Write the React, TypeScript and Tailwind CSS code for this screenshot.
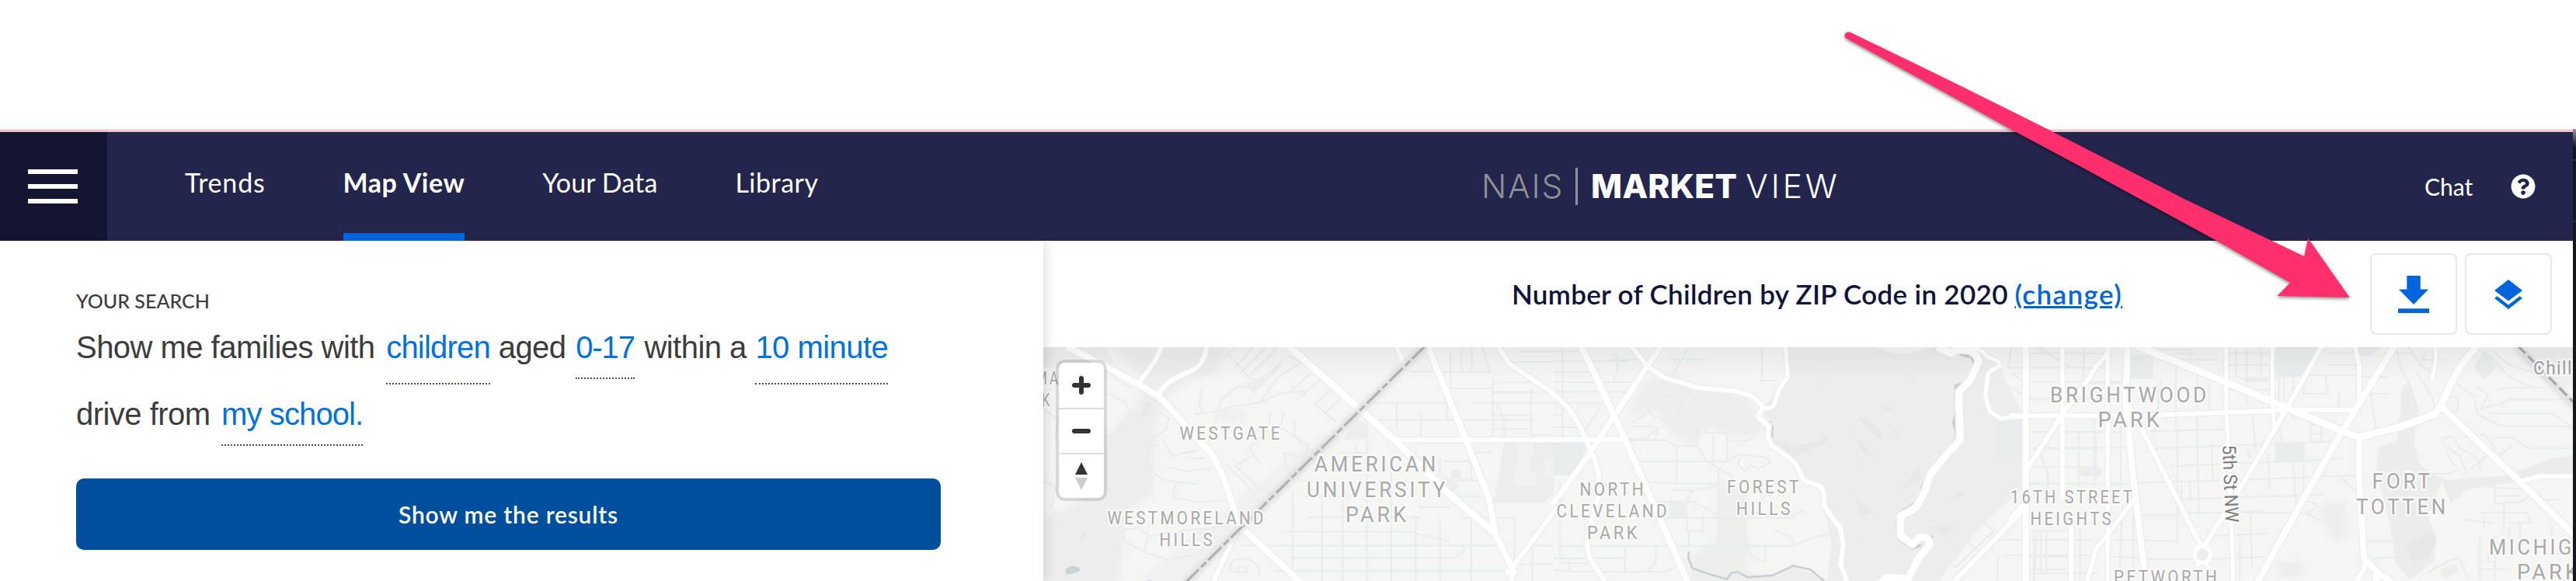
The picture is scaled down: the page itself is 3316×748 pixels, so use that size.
import React from "react";

type LabelProps = { x1: number; x2: number; y: number; s?: number; c?: string; children: string };

function Label({ x1, x2, y, s = 24.5, c = "#a9a9a9", children }: LabelProps) {
  return (
    <text
      x={x1}
      y={y}
      textLength={x2 - x1}
      lengthAdjust="spacingAndGlyphs"
      fontSize={s}
      fill={c}
      stroke="#f9f9f8"
      strokeWidth={5}
      strokeLinejoin="round"
      paintOrder="stroke"
      letterSpacing={4}
    >
      {children}
    </text>
  );
}

type Road = [number, string];

const WEST = "translate(1300 300) scale(.44643 .33333)";
const MID = "translate(2000 430) scale(.44643 .33333)";
const EAST = "translate(2600 430) scale(.45663 .33333)";

const westRoads: Road[] = [
  [8, "M165 441L270 510L372 585L430 632L460 672L500 735L545 800L582 855L610 925L635 1020L660 1130L690 1165L850 1364"],
  [6, "M440 431L418 495L372 580"],
  [6, "M568 431C560 520 530 530 500 545C460 570 440 590 428 628"],
  [9, "M800 431L1000 670L1110 800L1250 990L1400 1160"],
  [6, "M1112 431L1140 515"],
  [8, "M1203 431L1315 800L1380 1020L1400 1160L1450 1300"],
  [6, "M1110 799H1580"],
  [6, "M1405 431L1440 505L1568 620"],
  [6, "M1578 1060L1450 1290L1445 1364"],
  [6, "M655 1150L620 1250L580 1364"],
  [15, "M1445 1300V1320"],
];

const midRoads: Road[] = [
  [8, "M76 40L120 160L200 390L388 963"],
  [6, "M220 40L270 125L318 168L415 207L520 220Q570 232 585 255L607 285Q590 300 590 322L620 355L618 400L628 430L690 490Q712 530 720 565L770 590Q782 600 780 660L800 705L825 745L835 810L828 890L848 963"],
  [7, "M313 40L170 325L105 460L-5 660"],
  [5, "M668 40L675 165L650 215L635 275Q630 288 607 288"],
  [6, "M-10 225Q55 280 90 400L120 490Q135 560 130 620L97 780Q95 850 110 880L152 963"],
  [6, "M-10 408H200"],
  [9, "M1105 50L1145 75L1160 60L1195 62Q1225 75 1225 110L1200 180L1168 225L1170 320L1172 410L1130 470L1085 545L1070 610L1045 670L1000 705L1000 780L1035 812L1055 785Q1085 780 1085 815L1055 860L1022 945L960 940L940 963"],
  [5, "M1210 50L1235 65L1250 90Q1290 100 1285 125L1262 140Q1250 150 1250 180L1245 240L1258 300L1290 326L1370 316"],
  [6, "M1360 670L1150 963"],
  [6, "M1492 740V963"],
];

const eastRoads: Road[] = [
  [8, "M17 40V963"],
  [6, "M120 40V640"],
  [5.5, "M248 40V963"],
  [6, "M303 40L298 250L345 370L515 830"],
  [8, "M304 40L298 250L320 560L352 920"],
  [6, "M-30 316H250L400 312L590 303L760 293H945"],
  [9, "M330 45L580 185L760 290L955 400"],
  [9, "M955 400L1080 355L1170 310L1188 275L1215 190L1250 110L1292 40"],
  [5, "M582 40V300L590 450L602 963"],
  [5, "M712 40V260L718 370"],
  [6, "M854 40L760 270L680 460L610 620L515 830"],
  [6, "M943 40L957 120V250"],
  [8, "M957 390V560L970 865L1012 925L1055 963"],
  [8, "M1060 40L960 260L905 385L815 600L668 963"],
  [5, "M1172 40V110L1162 175"],
  [8, "M1188 280L1410 570L1562 775"],
  [6, "M1410 570L1465 550H1570"],
  [6, "M248 75L215 125L190 180L120 310L10 545"],
  [6, "M145 740V963"],
  [5.5, "M322 640L250 770L215 830L188 963"],
  [5, "M20 640L-30 715"],
  [6, "M975 880Q972 915 945 963M515 870L498 900M515 870L535 905"],
  [9, "M1006 915V963"],
];

const westMinor = [
  "M630 470L690 560L720 570L790 490M655 441L620 470M700 441L650 520M740 441L665 540M770 441L760 460L690 550",
  "M800 470L840 500L770 560L740 620L725 650M840 500L900 560L830 640M870 540L800 620M930 600L880 660L940 730M960 630L905 700",
  "M600 690L640 670L720 655L780 620L850 610M600 690L610 640L660 590L700 600M535 700L600 690L590 740",
  "M430 690L460 715L450 760L415 790Q390 850 400 900Q420 950 470 960L540 970M440 800L470 860L540 840M520 870H565",
  "M430 820L400 830M455 905L510 920L580 910M480 965L470 1020L540 1040L640 1030",
  "M750 700L745 760L690 830L720 890M790 690L780 750L860 820L850 870L790 850L800 920L850 960M820 720V780L850 830M700 860L650 900L700 960L760 1020M620 890L680 970L720 1040",
  "M320 1145L370 1140L400 1170L385 1230L330 1190V1145M320 1145L315 1240L290 1290L285 1344M400 1170L500 1150L640 1130M385 1230L450 1260L560 1240",
  "M280 620L330 650L350 700L310 760L285 790L272 780M300 560L350 600M110 460L160 520L140 560M96 680L140 720L130 800M100 960L130 980L120 1060L140 1100L130 1150",
  "M1150 535H1220M1160 536H1390M1270 470V600H1390M1302 441V535M1332 441V535M1362 441L1385 535M1392 560V800M1045 656H1260M1330 656H1568M1040 722H1285M1308 722H1503V600M1185 700V790M1115 656V760M1260 655V722",
  "M1448 498H1568M1470 458H1568M1392 577H1500M1392 615H1520M1503 660V780H1568M1392 704H1500M1392 757H1500M1405 660L1425 720V790",
  "M1170 840V880M1240 870V940M1330 850V960M1330 882H1250M1180 812L1300 812M1330 848H1390M1270 1018H1370M1220 955H1350",
  "M860 1098H1180M790 1153H1150L1270 1193M665 1207H1420M815 1255H1280L1310 1230V1207M760 1305H1430M840 1018H980M900 1010V1344M960 960V1344M1030 870V1344M1100 850V1344M1170 1100V1344M1240 1100V1344M1330 1060V1344M815 1000V1305M1180 1060H1270M1300 1100H1455V1300M1500 1207H1568M1507 1207V1344M1470 1280H1568",
  "M635 1290Q640 1255 680 1258Q720 1270 720 1320M635 1290Q630 1310 655 1310H685L680 1290L660 1288L655 1310M560 700L545 660L555 600M950 850H1030V700M1000 820V900",
];

const midMinor = [
  "M0 66H85M0 105H210M0 148H120M0 186H250M0 223H225M0 268H140M0 312H25M0 360H70M25 50V400M180 80L185 140L170 186M140 268L90 375M163 100H260M335 99H440M385 60L340 165M600 50L600 180H645",
  "M300 245L345 235L375 255L350 330L300 365L265 405H210M300 245L265 310L225 345M270 300L325 345M310 265L350 290M300 365L290 410M365 240L335 300M375 200L405 250L418 330L440 380L500 385L500 410M415 350L415 430L440 490L520 555M220 358H280",
  "M210 410H325L355 433H415M355 433V578M225 492H505L530 465L575 470L620 480L625 500L590 520L570 510L550 530L530 500L540 475M460 390V490M500 390V490M575 400L560 412H505",
  "M260 570L350 578H475M475 520V815M340 600L400 605L480 585M400 605L380 650M300 647H400L450 680L480 710M300 710H680L720 680M385 710V760H430V700M0 700H75M390 755V815M20 818H690L740 790L800 770M0 867H200M0 910L50 918H320L360 895M205 820V915M295 820V880L270 915M45 870V915M20 885H100M18 570V860M550 690L555 800L570 860L610 880V820",
  "M600 640L650 560M530 640L560 660L600 640M640 760L680 780L700 820M775 100L760 140L790 200L740 240L700 300L660 330M860 340L880 480L870 620L900 720L880 800M1100 220L1140 200M930 60L1000 90M780 220H720",
  "M1380 75H1460M1375 130H1460M1375 250H1460M1375 378H1440M1475 378H1568M1375 442H1568M1375 514H1568M1375 578H1568M1400 440L1425 540V590M1320 50L1310 130H1350M1300 200L1350 230M1320 150L1350 180M1400 50L1490 130M1375 760H1480M1280 795H1350M1300 860L1310 855H1568M1280 860V953M1385 760V953M1405 760V920M1375 925H1568M1240 730L1270 760L1160 900L1140 890M1190 800L1220 835",
];

const eastMinor = [
  "M30 75H110M130 75H240M30 130H240M30 185H285M30 250H110M130 250H290M130 378H290M370 375L580 368M30 442L310 438M370 442L900 415M30 578H310M330 575L580 565M600 565L950 545M430 510L800 490L900 480M440 640L860 620M440 690L800 690M340 700L450 700M30 795H200M265 795L450 800M345 870H490M540 870L690 860M30 860H140M260 860L340 865M265 925H340",
  "M40 50L150 130M180 50V240M210 330V640M215 400V560M60 460L80 550V600M165 380V620M285 330V600M180 190H290M30 910H130M170 750V950M50 760L40 950M75 760V930M290 660L280 950M320 700V900",
  "M390 200V300M400 180L380 380M440 90V360M500 130V400M385 440L390 520M445 370V800M500 380L505 700M535 190V290M540 420L545 560M610 60V170M640 60V280M680 50V160M655 300L665 450M395 60H480V130L560 180M395 100H560M440 75H500M590 75H705M590 120H705M590 215L640 220M640 215L705 215M455 580V700M480 570V640M540 780L700 770M620 800V950M650 700L655 900M700 460L705 600M770 470L780 680L850 720M610 690L690 680",
  "M720 160H945M870 75H945M870 120H950M730 165V270M745 165V260M770 165V240M800 170V230H870L860 160M1050 75H1110M1040 230H960M900 230V285M960 165H1040M990 230L1005 380M820 330V410M850 330V415H820M820 350H880M820 385H860M730 360L740 420L770 440M800 490V640L840 660L810 700M760 300L775 330M900 550L950 610M980 800H1050M985 870L1060 860M640 440L650 480",
  "M1060 50L1075 130L1100 200L1120 290M1095 50L1130 120L1160 150M1130 100H1200M1150 60L1130 110M1120 150L1165 250L1170 290M1075 220L1090 330L1150 320M1210 240L1235 250V300L1210 300M1230 190L1280 240L1290 310L1340 345L1370 358H1559M1285 200L1320 235L1300 290L1350 270L1380 253H1559M1320 307H1500L1530 330L1559 370M1345 215L1380 207H1480M1290 60L1330 90L1360 140L1400 180L1440 200M1330 60L1380 120L1450 150",
  "M1190 405L1220 395L1240 440L1290 480L1300 525M1190 405L1195 430L1240 470L1260 540M1250 400L1310 390L1340 440L1300 490L1270 520M1340 400L1390 400L1430 440L1559 440M1390 430L1340 480M1205 460L1225 510M1150 540L1200 540L1230 530M1320 590L1420 600L1440 620L1410 650L1340 655V590M1340 625H1410M1297 690H1430L1440 730H1380M1365 650V760M1297 780V950M1340 780V950M1410 730V850M1380 740V820M1250 718L1340 730M1308 690V750M1320 800H1340M1320 840V880H1340M1297 910H1370M1440 600L1480 640L1520 640M1500 740V800M1480 850L1559 850M1150 920L1210 875L1240 865L1265 950",
];

function Roads({ roads, t, casing }: { roads: Road[]; t: string; casing?: boolean }) {
  return (
    <g transform={t} fill="none" stroke={casing ? "#e9eeed" : "#ffffff"} strokeLinejoin="round">
      {roads.map(([w, d], i) => (
        <path key={i} d={d} strokeWidth={casing ? w + 2.5 : w} vectorEffect="non-scaling-stroke" />
      ))}
    </g>
  );
}

function Minor({ paths, t }: { paths: string[]; t: string }) {
  return (
    <g transform={t} fill="none" stroke="#e6edec" strokeLinejoin="round">
      {paths.map((d, i) => (
        <path key={i} d={d} strokeWidth={2} vectorEffect="non-scaling-stroke" />
      ))}
    </g>
  );
}

function StreetMap() {
  return (
    <svg className="block h-[301px] w-[1969px]" viewBox="1343 447 1969 301" fontFamily="Roboto, sans-serif">
      <defs>
        <linearGradient id="topShade" x1="0" y1="0" x2="0" y2="1">
          <stop offset="0" stopColor="#000" stopOpacity=".05" />
          <stop offset="1" stopColor="#000" stopOpacity="0" />
        </linearGradient>
        <filter id="soft"><feGaussianBlur stdDeviation="10" /></filter>
        <filter id="softRail"><feGaussianBlur stdDeviation="2" /></filter>
      </defs>
      <rect x="1343" y="447" width="1969" height="301" fill="#f5f5f4" />
      <g transform={WEST}>
        <g filter="url(#soft)" fill="#ededed">
          <path d="M300 441H620L600 540L520 570L450 640L420 760L410 1010L330 1080L320 1344H96V1100L200 1040L270 800L370 650L380 560Z" />
          <path d="M600 680H680V730H600ZM780 900L900 780L960 790L640 1150L500 1344H380L500 1200Z" fill="#f0f0ef" />
        </g>
        <path d="M96 441H280L300 500L140 520H96Z" fill="#efefee" />
        <path d="M415 935L410 1010L340 1030L330 950ZM680 580L740 560L785 490L780 520L720 600L700 620ZM1030 740V797H960L1000 720ZM1300 915V948H1272V915ZM1250 935L1295 975L1280 1000L1245 970ZM1425 810H1568V1010L1540 1040H1395Z" fill="#eceeee" />
        <path d="M1465 815H1510V860H1500V920H1518V975H1452V915H1460V870H1465ZM1545 870H1568V935H1540Z" fill="#f1f1f0" />
        <path d="M160 1318L162 1295L180 1285L198 1290L204 1305L175 1318ZM395 1344L402 1338L410 1344Z" fill="#cbd2d5" />
        <path d="M395 650L410 660L395 700L368 725ZM215 1155L225 1170L195 1210Z" fill="#e7e8e9" />
      </g>
      <g transform={MID}>
        <path filter="url(#soft)" d="M250 190L340 150L420 200L560 240L600 330L610 380L530 400L440 360L400 430L350 400L290 290L210 330ZM470 560L560 600L560 953H390V860L470 800Z" fill="#eeeeed" />
        <path d="M668 50H1230L1290 130L1310 200L1350 300V600L1230 740L1110 953H400L400 910L500 945L530 920L640 932L690 895L790 950L800 800L770 600L715 565L690 490L625 425L615 340L600 290L650 215L675 165Z" fill="#ededed" />
        <path d="M1280 320H1350V490H1280ZM0 420H100L60 545H0Z" fill="#e9ecec" />
        <path d="M925 50L980 76H1025L1085 52Z" fill="#f6f6f6" />
        <path d="M1015 155L1035 160L1050 190ZM875 315L940 360L950 410L905 370ZM865 400L930 470L900 470ZM1050 515L1065 560L1000 600ZM630 405L680 430L740 425L800 390L775 430L690 475ZM870 630L925 690L885 710ZM1135 635L1170 610L1190 615L1165 635ZM1080 745H1165L1130 780ZM960 345L990 365L998 410ZM940 275L985 290L960 300Z" fill="#e7e8e8" />
        <path d="M335 645H385V708H335Z" fill="#ebeeee" />
        <g fill="none" stroke="#c7cfd2" strokeWidth="3.5" strokeLinejoin="round">
          <path vectorEffect="non-scaling-stroke" d="M390 840L388 865L400 905L455 930L500 947L510 925L528 918L560 940L632 932L690 895L740 910L780 953" strokeWidth="2.5" />
          <path vectorEffect="non-scaling-stroke" d="M1170 78L1205 90L1215 125L1190 185L1160 200L1158 250L1165 290L1153 340L1164 400L1135 450L1100 500L1078 545L1062 590L1064 620L1040 655L1000 690L990 740L993 790L1035 828L1060 815M1065 772L1090 785L1094 812M620 340L630 360L628 400" />
        </g>
      </g>
      <g transform={EAST}>
        <path filter="url(#soft)" d="M840 670L920 640V780L880 800ZM730 880L800 880V940H730ZM1380 50H1559V200H1500Z" fill="#ededed" />
        <path d="M315 80H375V175H310ZM720 420H803V490H720ZM170 518H230V548H170ZM720 50H850L800 165H720ZM1280 130L1310 60L1345 130L1310 175ZM1183 910L1225 890L1237 915L1200 945ZM610 165H700V187H640ZM950 50H1020L990 85H960Z" fill="#eaeded" />
        <path d="M1080 200L1100 190L1125 290L1110 420L1130 510L1200 565L1380 545L1500 480L1559 470V540L1410 570L1260 600L1215 655L1190 570L1150 700L1175 790L1165 880L1100 950L1060 890L1045 740L1005 530L1010 440L1065 410Z" fill="#ebedec" />
        <path d="M1090 820L1150 760L1175 800L1150 870L1110 880Z" fill="#e6e8e8" />
      </g>
      <Minor paths={westMinor} t={WEST} />
      <Minor paths={midMinor} t={MID} />
      <Minor paths={eastMinor} t={EAST} />
      <Roads roads={westRoads} t={WEST} casing />
      <Roads roads={midRoads} t={MID} casing />
      <Roads roads={eastRoads} t={EAST} casing />
      <Roads roads={westRoads} t={WEST} />
      <Roads roads={midRoads} t={MID} />
      <Roads roads={eastRoads} t={EAST} />
      <ellipse cx="2835.2" cy="714" rx="10" ry="10.5" fill="#eceeee" stroke="#fff" strokeWidth="5" />
      <g fill="none">
        <path d="M1835 445L1526 750" stroke="#dcdcde" strokeWidth="11" opacity=".7" filter="url(#softRail)" />
        <path d="M1835 445L1526 750" stroke="#b0b0b0" strokeWidth="3" strokeDasharray="24 4 9 4" />
        <path d="M3239 445L3316 525" stroke="#dcdcde" strokeWidth="11" opacity=".7" filter="url(#softRail)" />
        <path d="M3241 445L3316 521" stroke="#a6a6a6" strokeWidth="3" strokeDasharray="14 5" />
      </g>
      <Label x1={1333} x2={1365} y={495}>MA</Label>
      <Label x1={1341} x2={1354} y={523}>K</Label>
      <Label x1={1518.5} x2={1651} y={566}>WESTGATE</Label>
      <Label x1={1692} x2={1852} y={607} s={27.5}>AMERICAN</Label>
      <Label x1={1682} x2={1864} y={639.5} s={27.5}>UNIVERSITY</Label>
      <Label x1={1732} x2={1814} y={671.5} s={27.5}>PARK</Label>
      <Label x1={1425.5} x2={1630} y={675}>WESTMORELAND</Label>
      <Label x1={1492.5} x2={1564} y={702.5}>HILLS</Label>
      <Label x1={2033.5} x2={2119} y={638}>NORTH</Label>
      <Label x1={2003.5} x2={2149} y={666}>CLEVELAND</Label>
      <Label x1={2043} x2={2111} y={693.5}>PARK</Label>
      <Label x1={2223} x2={2319} y={635}>FOREST</Label>
      <Label x1={2235} x2={2308} y={663}>HILLS</Label>
      <Label x1={2588} x2={2748} y={648}>16TH STREET</Label>
      <Label x1={2613.5} x2={2721} y={675.5}>HEIGHTS</Label>
      <Label x1={2639} x2={2844} y={517.5} s={27.5}>BRIGHTWOOD</Label>
      <Label x1={2700.5} x2={2784} y={550} s={27.5}>PARK</Label>
      <Label x1={3053.5} x2={3132} y={629} s={27.5}>FORT</Label>
      <Label x1={3033} x2={3152} y={661.5} s={27.5}>TOTTEN</Label>
      <Label x1={3204} x2={3356} y={714} s={27.5}>MICHIGAN</Label>
      <Label x1={3240} x2={3323} y={746} s={27.5}>PARK</Label>
      <Label x1={2721} x2={2857} y={751}>PETWORTH</Label>
      <text x="3261" y="482" fontSize="24.5" textLength="86" lengthAdjust="spacingAndGlyphs" letterSpacing="1.5" fill="#a0a0a0" stroke="#f9f9f8" strokeWidth="5" paintOrder="stroke">Chillum</text>
      <text transform="translate(2861 573) rotate(87.7)" fontSize="24" textLength="100" lengthAdjust="spacingAndGlyphs" fill="#7c7c7c" stroke="#f9f9f8" strokeWidth="5" paintOrder="stroke">5th St NW</text>
      <rect x="1343" y="447" width="1969" height="42" fill="url(#topShade)" />
    </svg>
  );
}

function MapControls() {
  return (
    <div className="absolute left-4 top-4 flex w-[66px] flex-col overflow-hidden rounded-xl border-4 border-black/12 bg-white bg-clip-padding">
      <button className="flex h-[60px] items-center justify-center border-b-2 border-[#dddddd]">
        <svg className="size-6" viewBox="0 0 24 24" stroke="#333" strokeWidth="6" strokeLinecap="round"><path d="M3 12H21M12 3V21" /></svg>
      </button>
      <button className="flex h-[58px] items-center justify-center border-b-2 border-[#dddddd]">
        <svg className="size-6" viewBox="0 0 24 24" stroke="#333" strokeWidth="6" strokeLinecap="round"><path d="M3 12H21" /></svg>
      </button>
      <button className="flex h-14 items-center justify-center">
        <svg className="h-9 w-4" viewBox="0 0 16 36"><path d="M0 16L8 0L16 16Z" fill="#333" /><path d="M0 20L8 36L16 20Z" fill="#ccc" /></svg>
      </button>
    </div>
  );
}

export default function App() {
  return (
    <div className="relative flex h-[748px] w-[3316px] flex-col overflow-hidden bg-white font-['Lato',sans-serif]">
      <div className="h-[166px] shrink-0" />
      <div className="flex flex-1">
        <div className="flex w-[3312px] flex-col">
          <div className="h-1 border-b-2 border-[#e9bfc6] bg-[#f3d3d8]" />
          <header className="flex h-[140px] bg-[#23254c] text-white">
            <button className="flex w-[138px] flex-col items-start gap-[13px] bg-[#131533] pl-9 pt-12">
              <span className="h-1.5 w-16 bg-white" />
              <span className="h-1.5 w-16 bg-white" />
              <span className="h-1.5 w-16 bg-white" />
            </button>
            <nav className="flex w-[1769px] gap-[100px] pl-[100px] text-[34px] leading-[129px] tracking-[0.5px]">
              <a className="tracking-[0.8px]">Trends</a>
              <a className="flex flex-col font-bold">
                <span className="h-[130px]">Map View</span>
                <span className="h-2.5 bg-[#0065dd]" />
              </a>
              <a className="tracking-[0.1px]">Your Data</a>
              <a>Library</a>
            </nav>
            <div className="flex w-[1214px] items-center font-['Inter',sans-serif] text-[42.5px]">
              <span className="font-light tracking-[1.8px] text-[#8e9196]">NAIS</span>
              <span className="ml-[15px] mr-[17px] h-12 w-[3px] bg-[#8e9196]" />
              <span className="font-extrabold tracking-[0.2px]">MARKET</span>
              <span className="ml-[11px] font-light tracking-[3.8px]">VIEW</span>
            </div>
            <div className="flex items-center">
              <span className="w-[111px] text-[30px]">Chat</span>
              <svg className="size-8" viewBox="0 0 512 512" fill="#fff"><path d="M504 256c0 136.997-111.043 248-248 248S8 392.997 8 256C8 119.083 119.043 8 256 8s248 111.083 248 248zM262.655 90c-54.497 0-89.255 22.957-116.549 63.758-3.536 5.286-2.353 12.415 2.715 16.258l34.699 26.31c5.205 3.947 12.621 3.008 16.665-2.122 17.864-22.658 30.113-35.797 57.303-35.797 20.429 0 45.698 13.148 45.698 32.958 0 14.976-12.363 22.667-32.534 33.976C247.128 238.528 216 254.941 216 296v4c0 6.627 5.373 12 12 12h56c6.627 0 12-5.373 12-12v-1.333c0-28.462 83.186-29.647 83.186-106.667 0-58.002-60.165-102-116.531-102zM256 338c-25.365 0-46 20.635-46 46 0 25.364 20.635 46 46 46s46-20.636 46-46c0-25.365-20.635-46-46-46z" /></svg>
            </div>
          </header>
          <div className="flex flex-1">
            <aside className="relative z-10 flex w-[1343px] flex-col bg-white pl-[98px] pt-[60px] shadow-[4px_0_14px_rgba(0,0,0,0.12)] [clip-path:inset(0_-24px_0_0)]">
              <h2 className="self-start text-[25px] font-medium leading-[34px] text-[#3c3c3c]">YOUR SEARCH</h2>
              <p className="font-['Liberation_Sans',sans-serif] text-[40px] leading-[86px] tracking-[-0.53px] text-[#3c3c3c]">
                <span>Show me families with</span>{" "}
                <a className="ml-1 border-b-2 border-dotted border-[#4a4a75] pb-6 tracking-[-0.77px] text-[#0071e3]">children</a>{" "}
                <span>aged</span>{" "}
                <a className="ml-0.5 mr-0.5 border-b-2 border-dotted border-[#4a4a75] pb-[17px] tracking-[-1.1px] text-[#0071e3]">0-17</a>{" "}
                <span>within a</span>{" "}
                <a className="ml-px border-b-2 border-dotted border-[#4a4a75] pb-6 text-[#0071e3]">10 minute</a>
                <br />
                <span>drive from</span>{" "}
                <a className="ml-1 border-b-2 border-dotted border-[#4a4a75] pb-[17px] tracking-[-0.9px] text-[#0071e3]">my school.</a>
              </p>
              <button className="mt-10 h-[92px] w-[1113px] rounded-[10px] bg-[#004f9f] text-[30px] font-semibold tracking-[0.8px] text-white">Show me the results</button>
            </aside>
            <main className="flex w-[1969px] flex-col">
              <div className="flex h-[137px] items-center bg-white">
                <h1 className="w-[1708px] pl-[603px] text-[35px] font-semibold text-[#10143a]">
                  <span className="tracking-[0.3px]">Number of Children by ZIP Code in 2020</span>{" "}
                  <a className="tracking-[1.4px] text-[#0065dd] underline">(change)</a>
                </h1>
                <div className="flex gap-2.5">
                  <button className="flex h-[105px] w-28 items-center justify-center rounded-lg border-2 border-[#e6e8f1]">
                    <svg className="h-12 w-10" viewBox="0 0 40 48" fill="#0065dd"><path d="M11.3 0H28.7V17.4H39L20 37L1 17.4H11.3ZM0 42.3H40V48H0Z" /></svg>
                  </button>
                  <button className="flex h-[105px] w-28 items-center justify-center rounded-lg border-2 border-[#e6e8f1]">
                    <svg className="h-[38px] w-9" viewBox="0 0 36 38" fill="#0065dd"><path d="M18 0L36 14L18 27.5L0 14ZM0 24L3.5 21.3L18 32.5L32.5 21.3L36 24L18 38Z" /></svg>
                  </button>
                </div>
              </div>
              <div className="relative">
                <StreetMap />
                <MapControls />
              </div>
            </main>
          </div>
        </div>
        <div className="flex w-1 flex-col bg-[#15171c]">
          <span className="h-6 bg-linear-to-b from-[#9a979c] to-[#15171c]" />
          <span className="mt-[15px] h-0.5 bg-[#2f3136]" />
          <span className="mt-[77px] h-0.5 bg-[#2f3136]" />
        </div>
      </div>
      <svg className="absolute left-[2340px] top-0 z-20 h-[448px] w-[976px] drop-shadow-[0_2px_2px_rgba(0,0,0,0.45)]" viewBox="0 0 1568 1344" preserveAspectRatio="none">
        <path d="M66 124Q340 370 540 560L760 770L1006 990L1014 920L1100 1149L950 1143L977 1092L820 925L540 640L400 500L58 147C53 138 56 122 66 124Z" fill="#ff2f6d" />
      </svg>
    </div>
  );
}
